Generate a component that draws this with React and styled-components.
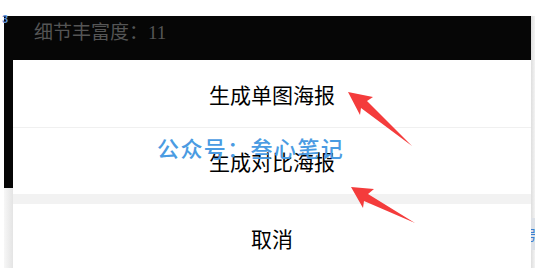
import React from 'react';
import styled, { createGlobalStyle } from 'styled-components';

const GlobalStyle = createGlobalStyle`
  html, body {
    margin: 0;
    padding: 0;
    background: #ffffff;
    overflow: hidden;
  }
  * {
    box-sizing: border-box;
  }
`;

const Page = styled.div`
  position: relative;
  width: 538px;
  height: 274px;
  padding: 16px 0 0 4px;
  display: flex;
  font-family: "Noto Sans CJK SC", "Noto Sans", sans-serif;
`;

const Frame = styled.div`
  display: flex;
  align-items: flex-start;
`;

const Main = styled.div`
  width: 527px;
  display: flex;
  flex-direction: column;
`;

const Header = styled.div`
  height: 44px;
  background: #060606;
  padding: 3px 0 0 30px;
  color: #555555;
  font-family: "Liberation Serif", "Noto Sans CJK SC", serif;
  font-size: 19px;
  line-height: 28px;
`;

const Body = styled.div`
  display: flex;
`;

const SideStrip = styled.div`
  width: 9px;
  display: flex;
  flex-direction: column;
`;

const SidePart = styled.div`
  height: ${p => p.h}px;
  background: ${p => p.dark ? '#060606' : 'linear-gradient(to right, #f7f7f7, #e4e4e4)'};
`;

const Sheet = styled.div`
  flex: 1;
  background: #ffffff;
  display: flex;
  flex-direction: column;
`;

const Option = styled.div`
  height: ${p => p.h}px;
  display: flex;
  align-items: center;
  justify-content: center;
  font-size: 21px;
  color: #000000;
  border-bottom: ${p => p.divider ? '1px solid #f0f0f0' : 'none'};
`;

const Gap = styled.div`
  height: 10px;
  background: #f2f2f2;
`;

const ScrollEdge = styled.div`
  width: 4px;
  height: 252px;
  background: linear-gradient(to right, #dedede, #f3f3f3);
  display: flex;
  flex-direction: column;
  padding-top: 202px;
`;

const EdgeChip = styled.div`
  height: 32px;
  background: #dde1e7;
  overflow: hidden;
  color: #3d7fd0;
  font-size: 14px;
  line-height: 32px;
  text-indent: -8px;
  white-space: nowrap;
`;

const Watermark = styled.div`
  position: absolute;
  left: 157px;
  top: 135px;
  font-size: 22px;
  line-height: 1.1;
  letter-spacing: 1.4px;
  color: #4a9be2;
  font-weight: 500;
  pointer-events: none;
`;

const Corner = styled.span`
  position: absolute;
  left: 2px;
  top: 13px;
  font-size: 11px;
  color: #5a8fd8;
  font-family: "Liberation Sans", sans-serif;
  font-weight: bold;
`;

const Arrows = styled.svg`
  position: absolute;
  left: 0;
  top: 0;
  pointer-events: none;
`;

export default function App() {
  return (
    <>
      <GlobalStyle />
      <Page>
        <Frame>
          <Main>
            <Header>细节丰富度：11</Header>
            <Body>
              <SideStrip>
                <SidePart h={128} dark />
                <SidePart h={80} />
              </SideStrip>
              <Sheet>
                <Option h={68} divider>生成单图海报</Option>
                <Option h={66}>生成对比海报</Option>
                <Gap />
                <Option h={67}>取消</Option>
              </Sheet>
            </Body>
          </Main>
          <ScrollEdge>
            <EdgeChip>号</EdgeChip>
          </ScrollEdge>
        </Frame>
        <Corner>3</Corner>
        <Watermark>公众号：叁心笔记</Watermark>
        <Arrows width="538" height="274" viewBox="0 0 538 274">
          <polygon
            points="348,92 373,97 367,101 412,146 361,108 360,115"
            fill="#f43c3c"
          />
          <polygon
            points="351,187 374,189 368,194 415,223 364,201 363,208"
            fill="#f43c3c"
          />
        </Arrows>
      </Page>
    </>
  );
}
